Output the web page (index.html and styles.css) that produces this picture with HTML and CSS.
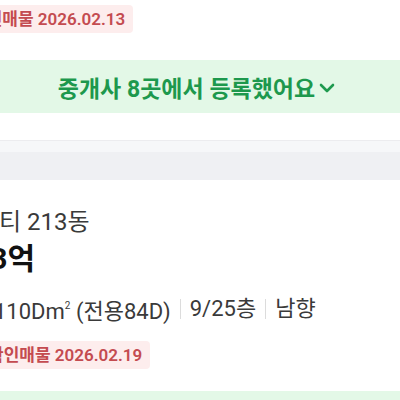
FILE: index.html
```html
<!DOCTYPE html>
<html lang="ko">
<head>
  <meta charset="UTF-8" />
  <meta name="viewport" content="width=device-width, initial-scale=1.0"/>
  <title>매물 목록</title>
  <link rel="stylesheet" href="styles.css">
</head>
<body>

  <!-- previous listing (bottom part) -->
  <div class="listing listing-prev">
    <div class="listing-body">
      <span class="tag">확인매물 2026.02.13</span>
    </div>
    <div class="agents">
      <span>중개사 8곳에서 등록했어요</span>
      <svg class="chevron" width="16" height="10" viewBox="0 0 16 10">
        <polyline points="2,2 8,8 14,2" fill="none" stroke="#1f9a4f" stroke-width="2.6" stroke-linecap="round" stroke-linejoin="round"/>
      </svg>
    </div>
  </div>

  <div class="divider"></div>

  <!-- next listing -->
  <div class="listing listing-next">
    <div class="listing-body">
      <div class="title">시티 213동</div>
      <div class="price">13억</div>
      <div class="info">
        <span class="area">110D<span class="unit">m<sup>2</sup></span> (전용84D)</span>
        <span class="sep"></span>
        <span>9/25층</span>
        <span class="sep"></span>
        <span>남향</span>
      </div>
      <span class="tag">확인매물 2026.02.19</span>
    </div>
    <div class="agents">
      <span>중개사 5곳에서 등록했어요</span>
    </div>
  </div>

</body>
</html>
```

FILE: styles.css
```css
body {
  margin: 0;
  width: 400px;
  height: 400px;
  overflow: hidden;
  background: #fff;
  font-family: Roboto, "Noto Sans CJK KR", sans-serif;
  color: #333;
}

.listing {
  background: #fff;
}

.listing-body {
  display: flex;
  flex-direction: column;
  align-items: flex-start;
  margin-left: -18px;
  padding-top: 27px;
}

.listing-prev .listing-body {
  margin-left: -35px;
  padding-top: 5px;
}

.tag {
  display: inline-block;
  height: 28px;
  line-height: 28px;
  padding: 0 8px 0 6px;
  border-radius: 4px;
  background: #fdeded;
  color: #c44b50;
  font-size: 17px;
  font-weight: 600;
}

.agents {
  display: flex;
  align-items: center;
  justify-content: center;
  gap: 4px;
  height: 53px;
  margin-top: 27px;
  padding-right: 7px;
  background: #e3f8e7;
  color: #1d984d;
  font-size: 23px;
  font-weight: 700;
}

.listing-prev .agents {
  margin-bottom: 27px;
}

.listing-next .agents {
  margin-top: 22px;
}

.chevron {
  margin-top: 2px;
}

.divider {
  height: 40px;
  border-top: 1px solid #ececef;
  background: linear-gradient(#f6f7f9 0, #f6f7f9 11px, #eff0f3 11px, #eff0f3 100%);
  box-sizing: border-box;
}

.title {
  margin-left: -5px;
  font-size: 24px;
  line-height: 30px;
  color: #3a3a3a;
}

.price {
  margin-top: 4px;
  margin-left: -9px;
  font-size: 30px;
  line-height: 36px;
  font-weight: 700;
  color: #111;
}

.info {
  display: flex;
  align-items: center;
  gap: 9px;
  margin-top: 14px;
  margin-left: 12px;
  font-size: 22px;
  line-height: 30px;
  color: #3a3a3a;
}

.unit sup {
  font-size: 10px;
  vertical-align: 10px;
}

.sep {
  width: 1px;
  height: 20px;
  background: #dcdcdc;
}

.info + .tag {
  margin-top: 14px;
}
```
